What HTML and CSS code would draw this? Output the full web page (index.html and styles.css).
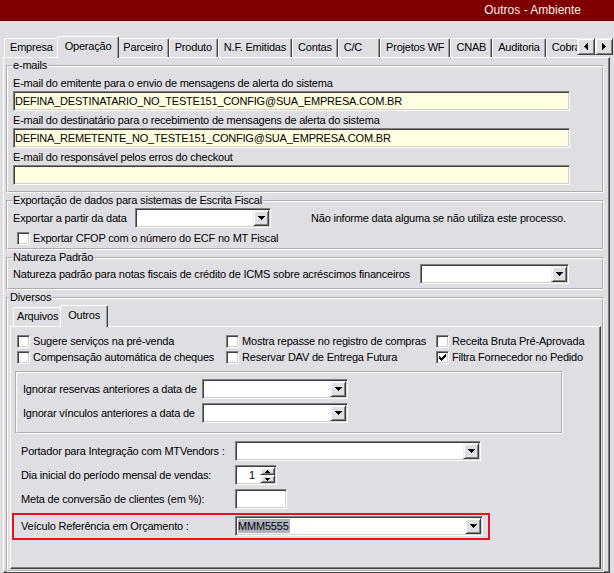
FILE: index.html
```html
<!DOCTYPE html>
<html lang="pt-BR">
<head>
<meta charset="utf-8">
<title>Outros - Ambiente</title>
<link rel="stylesheet" href="styles.css">
</head>
<body>
<div class="titlebar"><span class="title">Outros - Ambiente</span></div>
<div class="window">
  <div class="tabstrip">
    <div class="tabs">
      <span class="tab">Empresa</span>
      <span class="tab tab-active">Operação</span>
      <span class="tab">Parceiro</span>
      <span class="tab">Produto</span>
      <span class="tab">N.F. Emitidas</span>
      <span class="tab">Contas</span>
      <span class="tab tab-wide">C/C</span>
      <span class="tab">Projetos WF</span>
      <span class="tab">CNAB</span>
      <span class="tab">Auditoria</span>
      <span class="tab">Cobrança</span>
    </div>
    <div class="scroller">
      <span class="btn3d scroll-btn"><svg class="px" width="4" height="7" viewBox="0 0 4 7"><path d="M3 0h1v7H3zM2 1h1v5H2zM1 2h1v3H1zM0 3h1v1H0z"/></svg></span>
      <span class="btn3d scroll-btn"><svg class="px" width="4" height="7" viewBox="0 0 4 7"><path d="M0 0h1v7H0zM1 1h1v5H1zM2 2h1v3H2zM3 3h1v1H3z"/></svg></span>
    </div>
  </div>

  <div class="panel">
    <fieldset class="group emails">
      <legend>e-mails</legend>
      <div class="field-label">E-mail do emitente para o envio de mensagens de alerta do sistema</div>
      <div class="sunken text-input">DEFINA_DESTINATARIO_NO_TESTE151_CONFIG@SUA_EMPRESA.COM.BR</div>
      <div class="field-label">E-mail do destinatário para o recebimento de mensagens de alerta do sistema</div>
      <div class="sunken text-input">DEFINA_REMETENTE_NO_TESTE151_CONFIG@SUA_EMPRESA.COM.BR</div>
      <div class="field-label">E-mail do responsável pelos erros do checkout</div>
      <div class="sunken text-input"></div>
    </fieldset>

    <fieldset class="group export">
      <legend>Exportação de dados para sistemas de Escrita Fiscal</legend>
      <div class="export-row">
        <span class="export-label">Exportar a partir da data</span>
        <div class="sunken combo date-combo">
          <span class="combo-value"></span>
          <span class="btn3d combo-btn"><svg class="px" width="7" height="4" viewBox="0 0 7 4"><path d="M0 0h7v1H0zM1 1h5v1H1zM2 2h3v1H2zM3 3h1v1H3z"/></svg></span>
        </div>
        <span class="note">Não informe data alguma se não utiliza este processo.</span>
      </div>
      <div class="check-row"><span class="sunken cb"></span>Exportar CFOP com o número do ECF no MT Fiscal</div>
    </fieldset>

    <fieldset class="group natureza">
      <legend>Natureza Padrão</legend>
      <div class="natureza-row">
        <span>Natureza padrão para notas fiscais de crédito de ICMS sobre acréscimos financeiros</span>
        <div class="sunken combo">
          <span class="combo-value"></span>
          <span class="btn3d combo-btn"><svg class="px" width="7" height="4" viewBox="0 0 7 4"><path d="M0 0h7v1H0zM1 1h5v1H1zM2 2h3v1H2zM3 3h1v1H3z"/></svg></span>
        </div>
      </div>
    </fieldset>

    <fieldset class="group diversos">
      <legend>Diversos</legend>
      <div class="subtabs">
        <span class="tab subtab">Arquivos</span>
        <span class="tab subtab tab-active">Outros</span>
      </div>
      <div class="subpage">
        <div class="check-grid">
          <div class="check-item"><span class="sunken cb"></span>Sugere serviços na pré-venda</div>
          <div class="check-item"><span class="sunken cb"></span>Mostra repasse no registro de compras</div>
          <div class="check-item"><span class="sunken cb"></span>Receita Bruta Pré-Aprovada</div>
          <div class="check-item"><span class="sunken cb"></span>Compensação automática de cheques</div>
          <div class="check-item"><span class="sunken cb"></span>Reservar DAV de Entrega Futura</div>
          <div class="check-item"><span class="sunken cb"><svg class="px" width="7" height="7" viewBox="0 0 7 7"><path d="M6 0h1v1H6zM5 1h2v1H5zM0 2h1v1H0zM4 2h3v1H4zM0 3h2v1H0zM3 3h3v1H3zM0 4h5v1H0zM1 5h3v1H1zM2 6h1v1H2z"/></svg></span>Filtra Fornecedor no Pedido</div>
        </div>

        <div class="datebox">
          <span>Ignorar reservas anteriores a data de</span>
          <div class="sunken combo">
            <span class="combo-value"></span>
            <span class="btn3d combo-btn"><svg class="px" width="7" height="4" viewBox="0 0 7 4"><path d="M0 0h7v1H0zM1 1h5v1H1zM2 2h3v1H2zM3 3h1v1H3z"/></svg></span>
          </div>
          <span>Ignorar vínculos anteriores a data de</span>
          <div class="sunken combo">
            <span class="combo-value"></span>
            <span class="btn3d combo-btn"><svg class="px" width="7" height="4" viewBox="0 0 7 4"><path d="M0 0h7v1H0zM1 1h5v1H1zM2 2h3v1H2zM3 3h1v1H3z"/></svg></span>
          </div>
        </div>

        <div class="form-grid">
          <span>Portador para Integração com MTVendors :</span>
          <div class="sunken combo combo-wide">
            <span class="combo-value"></span>
            <span class="btn3d combo-btn"><svg class="px" width="7" height="4" viewBox="0 0 7 4"><path d="M0 0h7v1H0zM1 1h5v1H1zM2 2h3v1H2zM3 3h1v1H3z"/></svg></span>
          </div>
          <span>Dia inicial do período mensal de vendas:</span>
          <div class="sunken spin">
            <span class="spin-value">1</span>
            <span class="spin-btns">
              <span class="btn3d spin-btn"><svg class="px" width="5" height="3" viewBox="0 0 5 3"><path d="M2 0h1v1H2zM1 1h3v1H1zM0 2h5v1H0z"/></svg></span>
              <span class="btn3d spin-btn"><svg class="px" width="5" height="3" viewBox="0 0 5 3"><path d="M0 0h5v1H0zM1 1h3v1H1zM2 2h1v1H2z"/></svg></span>
            </span>
          </div>
          <span>Meta de conversão de clientes (em %):</span>
          <div class="sunken meta-input"></div>
        </div>

        <div class="highlight-box">
          <span>Veículo Referência em Orçamento :</span>
          <div class="sunken combo">
            <span class="combo-value"><span class="selected">MMM5555</span></span>
            <span class="btn3d combo-btn"><svg class="px" width="7" height="4" viewBox="0 0 7 4"><path d="M0 0h7v1H0zM1 1h5v1H1zM2 2h3v1H2zM3 3h1v1H3z"/></svg></span>
          </div>
        </div>
      </div>
    </fieldset>
  </div>
</div>
</body>
</html>
```

FILE: styles.css
```css
* {
  box-sizing: border-box;
}

body {
  margin: 0;
  width: 614px;
  height: 573px;
  overflow: hidden;
  background: #dfdfe3;
  font-family: "Liberation Sans", Arial, sans-serif;
  font-size: 11px;
  line-height: 13px;
  letter-spacing: -0.2px;
  color: #000;
}

.px {
  display: block;
  fill: #000;
  shape-rendering: crispEdges;
}

/* ---------- title bar ---------- */
.titlebar {
  height: 22px;
  background: #800000;
  border-bottom: 1px solid #eedcdc;
  display: flex;
  align-items: center;
  justify-content: flex-end;
  padding-right: 33px;
}

.title {
  color: #f4eeee;
  font-size: 12px;
  letter-spacing: 0;
}

/* ---------- shared 3D pieces ---------- */
.sunken {
  background: #fff;
  border: 1px solid;
  border-color: #808080 #fff #fff #808080;
  box-shadow: inset 1px 1px #404040, inset -1px -1px #d4d0c8;
}

.btn3d {
  display: flex;
  align-items: center;
  justify-content: center;
  background: #dfdfe3;
  border: 1px solid;
  border-color: #f0f0f0 #404040 #404040 #f0f0f0;
  box-shadow: inset 1px 1px #fff, inset -1px -1px #808080;
}

/* ---------- main tabs ---------- */
.window {
  margin: 14px 0 0 3px;
  width: 607px;
}

.tabstrip {
  display: flex;
  height: 21px;
  margin-right: -3px;
  padding-left: 1px;
}

.tabs {
  flex: 1;
  min-width: 0;
  display: flex;
  align-items: flex-start;
  height: 22px;
  overflow: hidden;
}

.tab {
  flex: none;
  margin-top: 2px;
  height: 19px;
  padding: 0 5px;
  line-height: 17px;
  white-space: nowrap;
  border-top: 1px solid #fff;
  border-left: 1px solid #fff;
  border-right: 1px solid #404040;
  box-shadow: inset -1px 0 #a0a0a0;
  border-radius: 2px 2px 0 0;
}

.tab-active {
  margin: 0 -2px;
  padding: 0 7px;
  height: 22px;
  line-height: 18px;
  position: relative;
  z-index: 1;
  background: #dfdfe3;
}

.tab-wide {
  padding-right: 17px;
}

.scroller {
  flex: none;
  display: flex;
  padding-top: 2px;
}

.scroll-btn {
  width: 18px;
  height: 17px;
}

/* ---------- panel ---------- */
.panel {
  height: 516px;
  overflow: hidden;
  border: 1px solid;
  border-color: #fff #404040 #404040 #fff;
  box-shadow: inset -1px -1px #808080;
  padding: 1px 5px 0 2px;
}

.group {
  margin: 0;
  min-width: 0;
  border: 2px groove #fff;
  padding: 2px 0 6px 5px;
}

.group + .group {
  margin-top: 1px;
}

.group legend {
  padding: 0 1px;
  margin-left: -1px;
  line-height: 13px;
}

/* e-mails */
.field-label {
  padding: 3px 0 1px;
  white-space: nowrap;
}

.text-input {
  width: 557px;
  height: 20px;
  background: #ffffe1;
  padding-left: 1px;
  line-height: 18px;
  white-space: nowrap;
  overflow: hidden;
}

/* combos */
.combo {
  display: flex;
  height: 20px;
  padding: 1px;
}

.combo-value {
  flex: 1;
  min-width: 0;
  line-height: 16px;
  padding-left: 1px;
  white-space: nowrap;
}

.combo-btn {
  flex: none;
  width: 16px;
  height: 16px;
}

.selected {
  background: #aeb3bf;
  padding: 1px 1px 1px 0;
}

/* exportação */
.export {
  padding: 1px 0 2px 5px;
}

.export-row {
  display: flex;
  align-items: center;
  height: 20px;
}

.export-label {
  width: 122px;
}

.date-combo {
  width: 136px;
}

.note {
  margin-left: 40px;
}

.check-row {
  display: flex;
  align-items: center;
  height: 16px;
  margin: 2px 0 0 4px;
}

.cb {
  flex: none;
  width: 13px;
  height: 13px;
  margin-right: 3px;
  display: flex;
  align-items: center;
  justify-content: center;
}

/* natureza */
.natureza {
  padding: 0 0 4px 5px;
}

.natureza-row {
  display: grid;
  grid-template-columns: 407px 149px;
  align-items: center;
  white-space: nowrap;
}

/* diversos */
.diversos {
  padding: 0 1px 1px 2px;
}

.subtabs {
  display: flex;
  align-items: flex-start;
  height: 21px;
  margin-top: 1px;
  padding-left: 3px;
}

.subtab {
  padding: 0 3px;
}

.subtab.tab-active {
  padding: 0 7px;
}

.subpage {
  height: 243px;
  border: 1px solid;
  border-color: #fff #404040 #404040 #fff;
  box-shadow: inset -1px -1px #808080;
  padding: 6px 0 0 1px;
}

.check-grid {
  display: grid;
  grid-template-columns: 209px 210px auto;
  grid-auto-rows: 16px;
  margin-left: 5px;
}

.check-item {
  display: flex;
  align-items: center;
  white-space: nowrap;
}

.datebox {
  margin: 6px 0 0 3px;
  width: 548px;
  border: 2px groove #fff;
  padding: 6px 0 9px 6px;
  display: grid;
  grid-template-columns: 179px 146px;
  row-gap: 4px;
  align-items: center;
  white-space: nowrap;
}

.form-grid {
  margin: 7px 0 0 9px;
  display: grid;
  grid-template-columns: 214px auto;
  row-gap: 4px;
  align-items: center;
  justify-items: start;
  white-space: nowrap;
}

.combo-wide {
  width: 246px;
}

.spin {
  display: flex;
  width: 42px;
  height: 20px;
  padding: 1px;
}

.spin-value {
  flex: 1;
  text-align: right;
  padding-right: 5px;
  line-height: 16px;
}

.spin-btns {
  flex: none;
  width: 15px;
  display: flex;
  flex-direction: column;
}

.spin-btn {
  flex: 1;
}

.meta-input {
  width: 52px;
  height: 20px;
}

.highlight-box {
  margin-top: 4px;
  width: 478px;
  border: 2px solid #e3141b;
  padding: 1px 5px 2px 7px;
  display: grid;
  grid-template-columns: 214px 248px;
  align-items: center;
  white-space: nowrap;
}
```
